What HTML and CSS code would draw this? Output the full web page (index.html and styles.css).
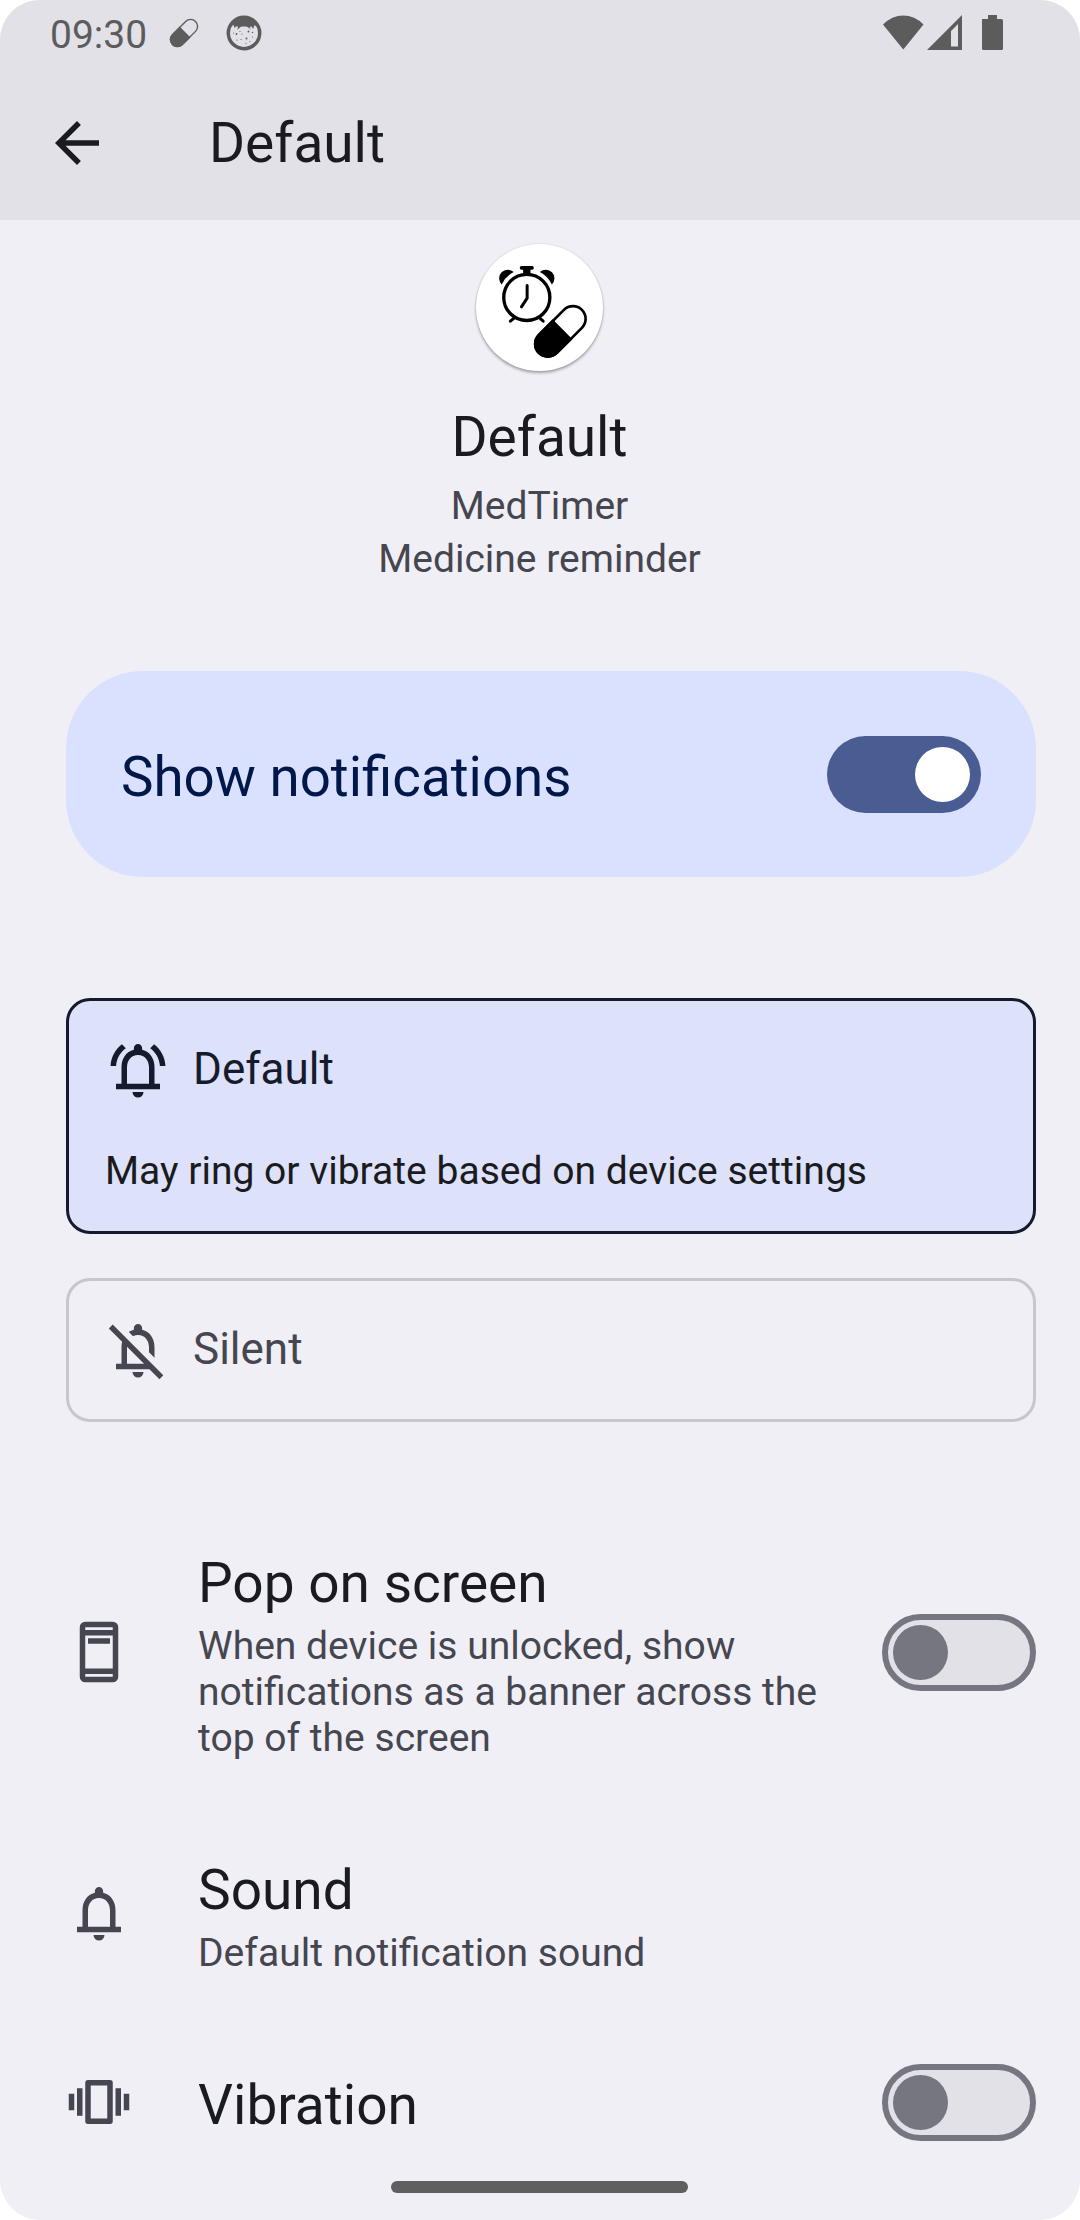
FILE: index.html
```html
<!DOCTYPE html>
<html lang="en">
<head>
<meta charset="utf-8">
<title>Default</title>
<link rel="stylesheet" href="styles.css">
</head>
<body>
<div class="screen">
  <header class="top">
    <div class="status">
      <span class="clock">09:30</span>
      <svg class="status-pill" viewBox="0 0 30 30"><g transform="translate(15 15) rotate(-45)"><rect x="-16.3" y="-7" width="32.6" height="14" rx="7" fill="none" stroke="currentColor" stroke-width="1.4"/><path d="M1.5-7.7v15.4H-9.3a7.7 7.7 0 0 1 0-15.4z" fill="currentColor"/></g></svg>
      <svg class="status-face" viewBox="0 0 36 36"><circle cx="18" cy="18" r="15.7" fill="none" stroke="currentColor" stroke-width="3.5"/><path d="M5 12C8 4 13 2 18 2s10 2 13 10l-2.500-2-1.300 4-1.700-2.600-2 .6 1.500 2.500-3.500-2.500c-2-.6-5-.6-7 0L11 15l1.200-3.200-2-.6L8.500 13 7.300 9.500z" fill="currentColor"/><g fill="currentColor"><circle cx="10.500" cy="19" r=".9"/><circle cx="22.500" cy="16.500" r=".9"/><circle cx="20.500" cy="23.500" r="1"/><circle cx="16" cy="19" r=".6"/><circle cx="26.500" cy="17.500" r=".7"/><circle cx="15" cy="24.500" r=".6"/><circle cx="11" cy="25" r=".6"/><circle cx="26.500" cy="22" r=".6"/><circle cx="20" cy="28.500" r=".6"/><circle cx="24" cy="26.500" r=".5"/><circle cx="7.500" cy="18" r=".5"/><circle cx="14" cy="16.500" r=".6"/></g></svg>
      <span class="spacer"></span>
      <svg class="status-system" viewBox="0 0 120 36" fill="currentColor"><path d="M0 9.500Q9 .5 20.300.5T40.500 9.500L20.300 34.500z"/><path fill-rule="evenodd" d="M44 35 79 0v35zM68 16v15.500h7V9z"/><path d="M99 4h6V0h9v4h4.500a1.500 1.500 0 0 1 1.500 1.500v28a1.500 1.500 0 0 1-1.500 1.500h-18A1.500 1.500 0 0 1 99 33.500z"/></svg>
    </div>
    <div class="appbar">
      <svg class="icon" viewBox="0 0 24 24"><path d="M20 11H7.830l5.590-5.590L12 4l-8 8 8 8 1.410-1.410L7.830 13H20z"/></svg>
      <h1 class="title">Default</h1>
    </div>
  </header>

  <main class="content">
    <section class="hero">
      <svg class="app-icon" viewBox="0 0 380 380">
        <circle cx="152" cy="160" r="69" fill="none" stroke="#000" stroke-width="10"/>
        <rect x="131" y="66" width="42" height="11" rx="5"/>
        <path d="M141 74h22v18h-22zM77 121A25.500 25.500 0 1 1 113 84Q89 96 77 121zM227 121A25.500 25.500 0 1 0 191 84Q215 96 227 121z"/>
        <path d="M153 124v38l-17 26M115 221l-12 10M190 221l11 10" fill="none" stroke="#000" stroke-width="9" stroke-linecap="round" stroke-linejoin="round"/>
        <g transform="translate(252.500 261.500) rotate(-45)"><rect x="-91" y="-38" width="182" height="76" rx="38" fill="none" stroke="#000" stroke-width="8"/><path d="M9-42v84H-53a42 42 0 0 1 0-84z"/></g>
      </svg>
      <h2 class="title">Default</h2>
      <p class="hero-line">MedTimer</p>
      <p class="hero-line">Medicine reminder</p>
    </section>

    <section class="main-switch">
      <span class="title">Show notifications</span>
      <span class="switch on"></span>
    </section>

    <section class="choices">
      <div class="choice selected">
        <div class="choice-head">
          <svg class="icon" viewBox="0 0 24 24"><path d="M18 17v-6c0-3.070-1.630-5.640-4.500-6.320V4c0-.83-.67-1.500-1.500-1.500s-1.500.67-1.500 1.500v.68C7.640 5.360 6 7.920 6 11v6H4v2h16v-2zm-2 0H8v-6c0-2.480 1.510-4.500 4-4.500s4 2.020 4 4.500zM12 22a2 2 0 0 0 2-2h-4a2 2 0 0 0 2 2zM7.580 4.080 6.150 2.650C3.750 4.480 2.170 7.300 2.030 10.500h2C4.180 7.850 5.540 5.530 7.580 4.080zM19.970 10.500h2c-.15-3.200-1.730-6.020-4.120-7.850l-1.420 1.430c2.020 1.450 3.390 3.770 3.540 6.420z"/></svg>
          <span class="choice-label">Default</span>
        </div>
        <p class="choice-note">May ring or vibrate based on device settings</p>
      </div>
      <div class="choice">
        <div class="choice-head">
          <svg class="icon" viewBox="0 0 24 24"><clipPath id="off"><path d="M3.200 0H24v20.800zM0 1.400 22.600 24H0z"/></clipPath><path clip-path="url(#off)" d="M18 17v-6c0-3.070-1.630-5.640-4.500-6.320V4c0-.83-.67-1.500-1.500-1.500s-1.500.67-1.500 1.500v.68C7.640 5.360 6 7.920 6 11v6H4v2h16v-2zm-2 0H8v-6c0-2.480 1.510-4.500 4-4.500s4 2.020 4 4.500z"/><path d="M12 22a2 2 0 0 0 2-2h-4a2 2 0 0 0 2 2zM1.400 4.150 2.800 2.750 21.200 21.200 19.800 22.600z"/></svg>
          <span class="choice-label">Silent</span>
        </div>
      </div>
    </section>

    <section class="prefs">
      <div class="pref">
        <svg class="icon" viewBox="0 0 24 24"><path d="M17 1H7a2 2 0 0 0-2 2v18a2 2 0 0 0 2 2h10a2 2 0 0 0 2-2V3a2 2 0 0 0-2-2zm0 20H7v-1h10zm0-3H7V6h10zm0-14H7V3h10zM8 7h8v2H8z"/></svg>
        <div class="pref-text">
          <h3 class="title">Pop on screen</h3>
          <p class="summary">When device is unlocked, show notifications as a banner across the top of the screen</p>
        </div>
        <span class="switch"></span>
      </div>
      <div class="pref">
        <svg class="icon" viewBox="0 0 24 24"><path d="M18 17v-6c0-3.070-1.630-5.640-4.500-6.320V4c0-.83-.67-1.500-1.500-1.500s-1.500.67-1.500 1.500v.68C7.640 5.360 6 7.920 6 11v6H4v2h16v-2zm-2 0H8v-6c0-2.480 1.510-4.500 4-4.500s4 2.020 4 4.500zM12 22a2 2 0 0 0 2-2h-4a2 2 0 0 0 2 2z"/></svg>
        <div class="pref-text">
          <h3 class="title">Sound</h3>
          <p class="summary">Default notification sound</p>
        </div>
      </div>
      <div class="pref single">
        <svg class="icon" viewBox="0 0 24 24"><path d="M1 9h2v6H1zM4 7h2v10H4zM18 7h2v10h-2zM21 9h2v6h-2zM16 4H8a1 1 0 0 0-1 1v14a1 1 0 0 0 1 1h8a1 1 0 0 0 1-1V5a1 1 0 0 0-1-1zm-1 14H9V6h6z"/></svg>
        <div class="pref-text">
          <h3 class="title">Vibration</h3>
        </div>
        <span class="switch"></span>
      </div>
    </section>
  </main>
  <div class="gesture-bar"></div>
</div>
</body>
</html>
```
FILE: styles.css
```css
* { box-sizing: border-box; margin: 0; padding: 0; }

body {
  background: #fff;
  font-family: Roboto, sans-serif;
  color: #1a1b20;
}

.screen {
  position: relative;
  width: 1080px;
  height: 2220px;
  overflow: hidden;
  border-radius: 40px;
  background: #f0eff6;
}

.top { height: 220px; background: #e2e1e8; }

.status {
  display: flex;
  align-items: flex-start;
  height: 66px;
  padding: 0 77px 0 50px;
  color: #5c5c5d;
}
.clock { width: 119px; padding-top: 12px; font-size: 39px; line-height: 46px; }
.status-pill { width: 30px; height: 30px; margin-top: 18px; }
.status-face { width: 36px; height: 36px; margin: 15px 0 0 27px; }
.spacer { flex: 1; }
.status-system { width: 120px; height: 36px; margin-top: 15px; }

.appbar {
  display: flex;
  align-items: center;
  gap: 99px;
  height: 154px;
  padding-left: 44px;
}

.icon { display: block; flex: none; width: 66px; height: 66px; fill: currentColor; }
.title { font-size: 55px; font-weight: 400; line-height: 64px; }

.content { padding: 24px 44px 0 66px; }

.hero {
  display: flex;
  flex-direction: column;
  align-items: center;
  height: 427px;
  margin-left: -22px;
  padding-right: 1px;
}
.app-icon {
  width: 127px;
  height: 127px;
  margin-bottom: 34px;
  border-radius: 50%;
  background: #fff;
  box-shadow: 0 2px 3px rgba(0, 0, 0, .32), 0 0 2px rgba(0, 0, 0, .12);
}
.hero .title { margin-bottom: 11px; }
.hero-line { font-size: 39px; line-height: 53px; color: #45464f; }

.main-switch {
  display: flex;
  align-items: center;
  justify-content: space-between;
  height: 206px;
  padding: 0 55px;
  border-radius: 77px;
  background: #dae1ff;
  color: #001849;
}
.main-switch .title { padding-top: 5px; font-size: 54.7px; }

.switch {
  display: flex;
  flex: none;
  align-items: center;
  width: 154px;
  height: 77px;
  padding-left: 5px;
  border: 6px solid #757680;
  border-radius: 39px;
  background: #e2e1e8;
}
.switch::before {
  content: "";
  width: 55px;
  height: 55px;
  border-radius: 50%;
  background: #757680;
}
.switch.on {
  justify-content: flex-end;
  padding: 0 11px 0 0;
  border: 0;
  background: #495d92;
}
.switch.on::before { background: #fff; }

.choices {
  display: flex;
  flex-direction: column;
  gap: 44px;
  margin-top: 121px;
}
.choice {
  height: 144px;
  padding: 36px 36px 0;
  border: 3px solid #c5c6d0;
  border-radius: 24px;
  color: #45464f;
}
.choice.selected { height: 236px; border-color: #151b2c; background: #dde1f9; color: #151b2c; }
.choice-head { display: flex; align-items: center; gap: 22px; font-size: 44px; line-height: 52px; }
.choice-label { padding-bottom: 2px; }
.choice-note { margin-top: 45px; font-size: 39.05px; line-height: 46px; color: #1a1b20; }

.prefs { margin-top: 77px; }
.pref { display: flex; align-items: center; padding: 45.5px 0; }
.pref.single { padding: 43px 0; }
.pref .icon { margin: 0 66px 1px 0; color: #45464f; }
.pref-text { flex: 1; padding: 6px 50px 0 0; }
.pref.single .pref-text { padding-top: 5px; }
.summary { margin-top: 8px; font-size: 39.05px; line-height: 46px; color: #45464f; }

.gesture-bar {
  position: absolute;
  left: 391px;
  bottom: 27px;
  width: 297px;
  height: 12px;
  border-radius: 6px;
  background: #5f5f60;
}
```
